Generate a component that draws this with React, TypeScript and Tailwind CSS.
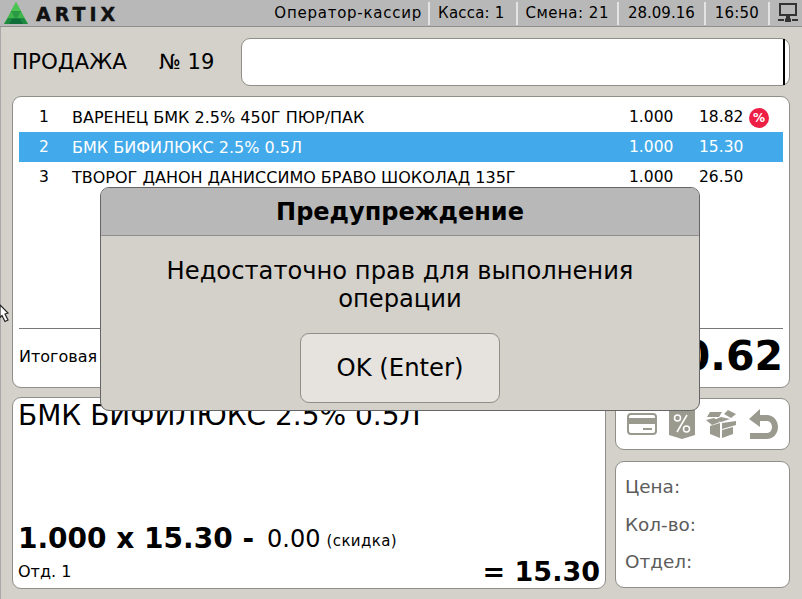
const rows = [
  { n: '1', name: 'ВАРЕНЕЦ БМК 2.5% 450Г ПЮР/ПАК', qty: '1.000', price: '18.82', promo: true },
  { n: '2', name: 'БМК БИФИЛЮКС 2.5% 0.5Л', qty: '1.000', price: '15.30', active: true },
  { n: '3', name: 'ТВОРОГ ДАНОН ДАНИССИМО БРАВО ШОКОЛАД 135Г', qty: '1.000', price: '26.50' },
];

function Logo() {
  return (
    <svg width="24" height="22" viewBox="0 0 24 22" className="mt-[2px]">
      <polygon points="12,0 24,22 0,22" fill="#3fb54a" />
      <polygon points="12,0 17,9 7,9" fill="#4cc456" />
      <polygon points="7,9 17,9 12,18" fill="#2b9a45" />
      <polygon points="4,16 20,16 24,22 0,22" fill="#1e8a40" />
      <polygon points="8,17 16,17 19,22 5,22" fill="#0f6e3a" />
    </svg>
  );
}

function StatusItem({ children, className }: { children: React.ReactNode; className?: string }) {
  return <div className={`h-[23px] flex items-center border-r-2 border-[#e4e4e4] ${className ?? ''}`}>{children}</div>;
}

function Network() {
  return (
    <svg width="20" height="20" viewBox="0 0 20 20" className="ml-[8px]" fill="#333">
      <path d="M1 0h18v13H1zM3 2v9h14V2z" fillRule="evenodd" />
      <rect x="8" y="13" width="4" height="4" />
      <rect x="0" y="16" width="6" height="2" />
      <rect x="7" y="15.5" width="6" height="3.5" />
      <rect x="14" y="16" width="6" height="2" />
    </svg>
  );
}

function CardIcon() {
  return (
    <svg width="30" height="22" viewBox="0 0 30 22">
      <rect x="1" y="1" width="28" height="20" rx="3" fill="none" stroke="#9b9a8f" strokeWidth="2" />
      <rect x="1" y="5" width="28" height="6" fill="#9b9a8f" />
      <rect x="16" y="15" width="9" height="2" fill="#9b9a8f" />
    </svg>
  );
}

function PercentIcon() {
  return (
    <svg width="26" height="30" viewBox="0 0 26 30">
      <path d="M0 0h26v26l-13 4-13-4z" fill="#9b9a8f" />
      <path d="M18 6L8 23" stroke="#fff" strokeWidth="1.5" />
      <circle cx="8.5" cy="9" r="3" fill="none" stroke="#fff" strokeWidth="1.5" />
      <circle cx="17.5" cy="20" r="3" fill="none" stroke="#fff" strokeWidth="1.5" />
    </svg>
  );
}

function BoxIcon() {
  return (
    <svg width="31" height="28" viewBox="0 0 31 28" fill="#9b9a8f">
      <path d="M4 2h12l-3 5H1z" />
      <path d="M22 0l8 4-5 4-7-4z" />
      <path d="M0 10l8-2 6 4-8 3z" />
      <path d="M15 7l9 2-9 3-7-2z" />
      <path d="M30 11v4l-14 4v-6z" />
      <path d="M4 16l10-3v15L4 24z" />
      <path d="M16 20l11-3v7l-11 4z" />
    </svg>
  );
}

function BackIcon() {
  return (
    <svg width="29" height="30" viewBox="0 0 29 30" fill="#9b9a8f">
      <path d="M0 10L11 0v6h7c6 0 11 5 11 12s-5 12-11 12H1v-6h17c3 0 5-3 5-6s-2-6-5-6h-7v6z" />
    </svg>
  );
}

export default function App() {
  return (
    <div className="relative w-[802px] h-[599px] overflow-hidden bg-[#d4d0ca] text-black font-['DejaVu_Sans',sans-serif] shadow-[inset_1px_0_0_#a9a9a9]">
      <header className="h-[27px] bg-[#b8b8b8] border-b border-[#8f8f8f] flex items-start justify-between pr-[4px] pl-[4px] text-[15px]">
        <div className="flex items-start gap-[8px]">
          <Logo />
          <span className="font-black text-[19px] tracking-[4px] mt-[1px] leading-[26px] text-[#111] [-webkit-text-stroke:0.4px_#111]">ARTIX</span>
        </div>
        <div className="flex items-center h-[26px] leading-none">
          <StatusItem className="tracking-[0.75px] pr-[6px]">Оператор-кассир</StatusItem>
          <StatusItem className="tracking-[0.2px] pl-[8px] pr-[11px]">Касса: 1</StatusItem>
          <StatusItem className="tracking-[0.5px] pl-[8px] pr-[8px]">Смена: 21</StatusItem>
          <StatusItem className="pl-[9px] pr-[9px]">28.09.16</StatusItem>
          <StatusItem className="tracking-[0.2px] pl-[9px] pr-[9px]">16:50</StatusItem>
          <Network />
        </div>
      </header>

      <div className="flex items-center h-[48px] mt-[11px] ml-[12px] mr-[12px]">
        <div className="w-[147px] text-[21.4px] leading-none">ПРОДАЖА</div>
        <div className="w-[82px] text-[21px] leading-none">№ 19</div>
        <div className="flex-1 h-[48px] bg-white rounded-[9px] border border-[#8f8e88] flex justify-end pr-[4px]">
          <div className="w-[2px] bg-black" />
        </div>
      </div>

      <section className="mt-[10px] mx-[12px] h-[292px] bg-white rounded-[9px] border border-[#8f8e88] flex flex-col px-[6px] pt-[5px]">
        <div className="flex-1">
          {rows.map((r) => (
            <div key={r.n} className={`flex items-center h-[30px] pt-[2px] text-[15.5px] ${r.active ? 'bg-[#42aaea] text-white' : ''}`}>
              <span className="w-[53px] pl-[20px]">{r.n}</span>
              <span className="w-[557px] text-[16px] whitespace-nowrap">{r.name}</span>
              <span className="w-[70px]">{r.qty}</span>
              <span className="w-[50px]">{r.price}</span>
              {r.promo && (
                <span className="w-[20px] h-[20px] rounded-full bg-[#ee1f45] text-white text-[12px] font-bold flex items-center justify-center">%</span>
              )}
            </div>
          ))}
        </div>
        <div className="border-t border-[#777] h-[59px] flex items-center justify-between">
          <span className="text-[16px] mb-[3px]">Итоговая</span>
          <span className="text-[41px] font-bold leading-none mb-[3px]">40.62</span>
        </div>
      </section>

      <div className="flex gap-[9px] mt-[9px] mx-[12px]">
        <section className="w-[594px] h-[192px] bg-white rounded-[9px] border border-[#8f8e88] flex flex-col overflow-hidden px-[5px]">
          <div className="text-[28px] leading-[36px] flex-1">БМК БИФИЛЮКС 2.5% 0.5Л</div>
          <div className="flex items-baseline h-[34px] leading-[34px] -mb-[3px]">
            <span className="text-[28px] font-bold relative top-[3px]">1.000 x 15.30 -</span>
            <span className="text-[24px] ml-[13px] relative top-[2px]">0.00</span>
            <span className="text-[15px] tracking-[0.4px] ml-[6px] relative top-[1px]">(скидка)</span>
          </div>
          <div className="flex items-baseline justify-between h-[38px] leading-[38px]">
            <span className="text-[16px] relative -top-[1px]">Отд. 1</span>
            <span className="text-[27px] font-bold relative top-[3px]">= 15.30</span>
          </div>
        </section>
        <div className="flex-1 flex flex-col">
          <div className="h-[52px] mt-[1px] bg-white rounded-[9px] border border-[#8f8e88] flex items-center justify-between px-[11px]">
            <CardIcon />
            <PercentIcon />
            <BoxIcon />
            <BackIcon />
          </div>
          <div className="h-[127px] mt-[11px] bg-white rounded-[9px] border border-[#8f8e88] px-[9px] pt-[6px] text-[18.4px] text-[#5c5c5c] leading-[37.5px]">
            <div>Цена:</div>
            <div>Кол-во:</div>
            <div>Отдел:</div>
          </div>
        </div>
      </div>

      {/* modal */}
      <div className="absolute left-[100px] top-[187px] w-[600px] h-[224px] rounded-[9px] border border-[#666] bg-[#d4d0ca] overflow-hidden flex flex-col items-center">
        <div className="w-full h-[48px] shrink-0 bg-[#b8b8b8] border-b border-[#8f8f8f] flex items-center justify-center text-[24px] font-bold">Предупреждение</div>
        <div className="mt-[21px] w-[540px] text-center text-[24.2px] leading-[28px]">Недостаточно прав для выполнения операции</div>
        <button className="mt-[20px] w-[200px] h-[70px] rounded-[9px] border border-[#8f8e88] bg-[#e6e3df] text-[24.3px]">OK (Enter)</button>
      </div>

      {/* cursor */}
      <svg className="absolute left-0 top-[304px]" width="10" height="19" viewBox="0 0 10 19">
        <path d="M0 1l8 8-3 1 3 6-3 1.500-3-6-2 2z" fill="#fff" stroke="#222" strokeWidth="1.200" />
      </svg>
    </div>
  );
}
